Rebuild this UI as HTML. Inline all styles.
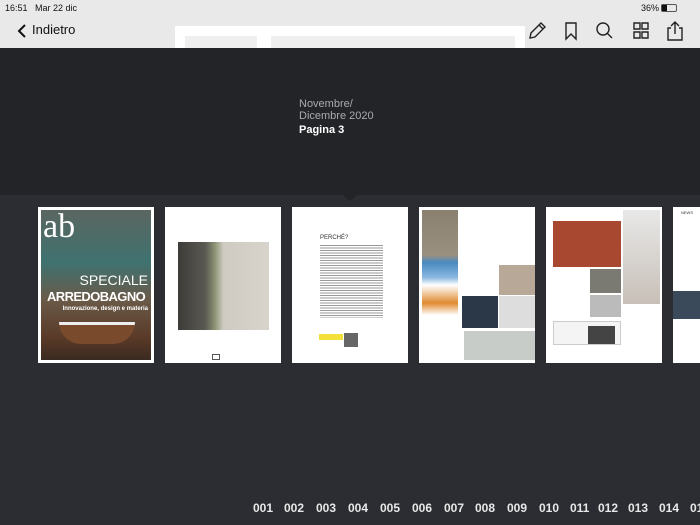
<!DOCTYPE html>
<html><head><meta charset="utf-8"><style>
*{margin:0;padding:0;box-sizing:border-box}
body{width:700px;height:525px;overflow:hidden;background:#2b2d32;font-family:"Liberation Sans",sans-serif;position:relative}
.top{position:absolute;left:0;top:0;width:700px;height:48px;background:#e9e9ea}
.peek{position:absolute;left:175px;top:26px;width:350px;height:22px;background:#fff}
.peek div{position:absolute;top:10px;height:12px;background:#efefef}
.st{position:absolute;top:3px;font-size:9px;color:#111}
.back{position:absolute;left:16px;top:22px;font-size:13px;color:#111}
.panel{position:absolute;left:0;top:48px;width:700px;height:147px;background:#222428}
.tri{position:absolute;left:343px;top:195px;width:0;height:0;border-left:7px solid transparent;border-right:7px solid transparent;border-top:6px solid #222428}
.t1{position:absolute;left:299px;top:98px;font-size:11px;color:#a9abaf;line-height:12px}
.t2{position:absolute;left:299px;top:124px;font-size:11px;color:#fff;font-weight:bold}
.pg{position:absolute;top:207px;width:116px;height:156px;background:#fff}
.num{position:absolute;top:501px;font-size:12px;color:#e8e8e8;font-weight:bold}
</style></head><body>
<div class="top">
<div class="peek"><div style="left:10px;width:72px"></div><div style="left:96px;width:244px"></div></div>
<div class="st" style="left:5px">16:51 &nbsp; Mar 22 dic</div>
<div class="st" style="left:641px">36%</div>
<div style="position:absolute;left:661px;top:4px;width:16px;height:8px;border:1px solid #555;border-radius:2px"><div style="width:5px;height:6px;background:#111"></div></div>
<svg style="position:absolute;left:16px;top:23px" width="12" height="16"><path d="M9 2 L3 8 L9 14" stroke="#111" stroke-width="2" fill="none"/></svg>
<div class="back" style="left:32px">Indietro</div>
<svg style="position:absolute;left:526px;top:20px" width="170" height="22" fill="none" stroke="#222" stroke-width="1.4">
<path d="M4 18 L5 13 L15 3 L19 7 L9 17 Z M13 5 L17 9"/>
<path d="M40 3 H50 V19 L45 14 L40 19 Z"/>
<circle cx="77" cy="9" r="6"/><path d="M81 13 L86 18"/>
<path d="M108 3h6v6h-6z M116 3h6v6h-6z M108 12h6v6h-6z M116 12h6v6h-6z"/>
<path d="M145 8 H142 V20 H156 V8 H153 M149 14 V2 M145 6 L149 2 L153 6"/>
</svg>
</div>
<div class="panel"></div><div class="tri"></div>
<div class="t1">Novembre/<br>Dicembre 2020</div>
<div class="t2">Pagina 3</div>
<div class="pg" style="left:38px;padding:3px"><div style="width:100%;height:100%;background:linear-gradient(180deg,#5b6660 0%,#3f7270 35%,#6a5a48 60%,#5a3a28 85%,#3a2a20 100%);position:relative;color:#fff;overflow:hidden">
<div style="position:absolute;left:2px;top:2px;font-family:'Liberation Serif';font-size:34px;line-height:30px">ab</div>
<div style="position:absolute;right:3px;top:62px;font-size:14px">SPECIALE</div>
<div style="position:absolute;left:6px;top:79px;font-size:13px;font-weight:bold;letter-spacing:-0.6px">ARREDOBAGNO</div>
<div style="position:absolute;right:3px;top:96px;font-size:6px;font-weight:bold">Innovazione, design e materia</div>
<div style="position:absolute;left:18px;top:112px;width:76px;height:22px;background:#7a4a2c;border-radius:0 0 30px 30px;border-top:3px solid #eee"></div>
</div></div>
<div class="pg" style="left:165px"><div style="position:absolute;left:13px;top:35px;width:91px;height:88px;background:linear-gradient(90deg,#3d3c38 0,#5a5954 30%,#8a9070 40%,#cfcbc2 50%,#d8d3cb 100%)"></div><div style="position:absolute;left:47px;top:147px;width:8px;height:6px;border:1px solid #555"></div></div>
<div class="pg" style="left:292px"><div style="position:absolute;left:28px;top:28px;font-size:6px;color:#333">PERCHÉ?</div><div style="position:absolute;left:28px;top:38px;width:63px;height:73px;background:repeating-linear-gradient(180deg,#9a9a9a 0,#9a9a9a 1px,#fff 1px,#fff 2.5px)"></div><div style="position:absolute;left:27px;top:127px;width:24px;height:6px;background:#f3e13a"></div><div style="position:absolute;left:52px;top:126px;width:14px;height:14px;background:#666"></div></div>
<div class="pg" style="left:419px"><div style="position:absolute;left:3px;top:3px;width:36px;height:150px;background:linear-gradient(180deg,#8a8070 0,#9a9080 30%,#4a8ac0 35%,#8ab8e0 45%,#fff 50%,#e08a30 62%,#fff 70%,#fff 100%)"></div><div style="position:absolute;left:80px;top:58px;width:36px;height:30px;background:#b8a898"></div><div style="position:absolute;left:43px;top:89px;width:36px;height:32px;background:#2a3848"></div><div style="position:absolute;left:80px;top:89px;width:36px;height:32px;background:#ddd"></div><div style="position:absolute;left:45px;top:124px;width:71px;height:29px;background:#c8ccc8"></div></div>
<div class="pg" style="left:546px"><div style="position:absolute;left:7px;top:14px;width:68px;height:46px;background:#a84830"></div><div style="position:absolute;left:77px;top:3px;width:37px;height:94px;background:linear-gradient(180deg,#e8e8e8,#c8c0b8)"></div><div style="position:absolute;left:44px;top:62px;width:31px;height:24px;background:#7a7a72"></div><div style="position:absolute;left:44px;top:88px;width:31px;height:22px;background:#bbb"></div><div style="position:absolute;left:7px;top:114px;width:68px;height:24px;border:1px solid #ccc;background:#f4f4f4"></div><div style="position:absolute;left:42px;top:119px;width:27px;height:18px;background:#444"></div></div>
<div class="pg" style="left:673px"><div style="position:absolute;left:8px;top:3px;font-size:4px;color:#333">NEWS</div><div style="position:absolute;left:0;top:84px;width:27px;height:28px;background:#3a4a5a"></div></div>
<div class="num" style="left:253px">001</div><div class="num" style="left:284px">002</div><div class="num" style="left:316px">003</div><div class="num" style="left:348px">004</div><div class="num" style="left:380px">005</div><div class="num" style="left:412px">006</div><div class="num" style="left:444px">007</div><div class="num" style="left:475px">008</div><div class="num" style="left:507px">009</div><div class="num" style="left:539px">010</div><div class="num" style="left:570px">011</div><div class="num" style="left:598px">012</div><div class="num" style="left:628px">013</div><div class="num" style="left:659px">014</div><div class="num" style="left:690px">015</div>
</body></html>
